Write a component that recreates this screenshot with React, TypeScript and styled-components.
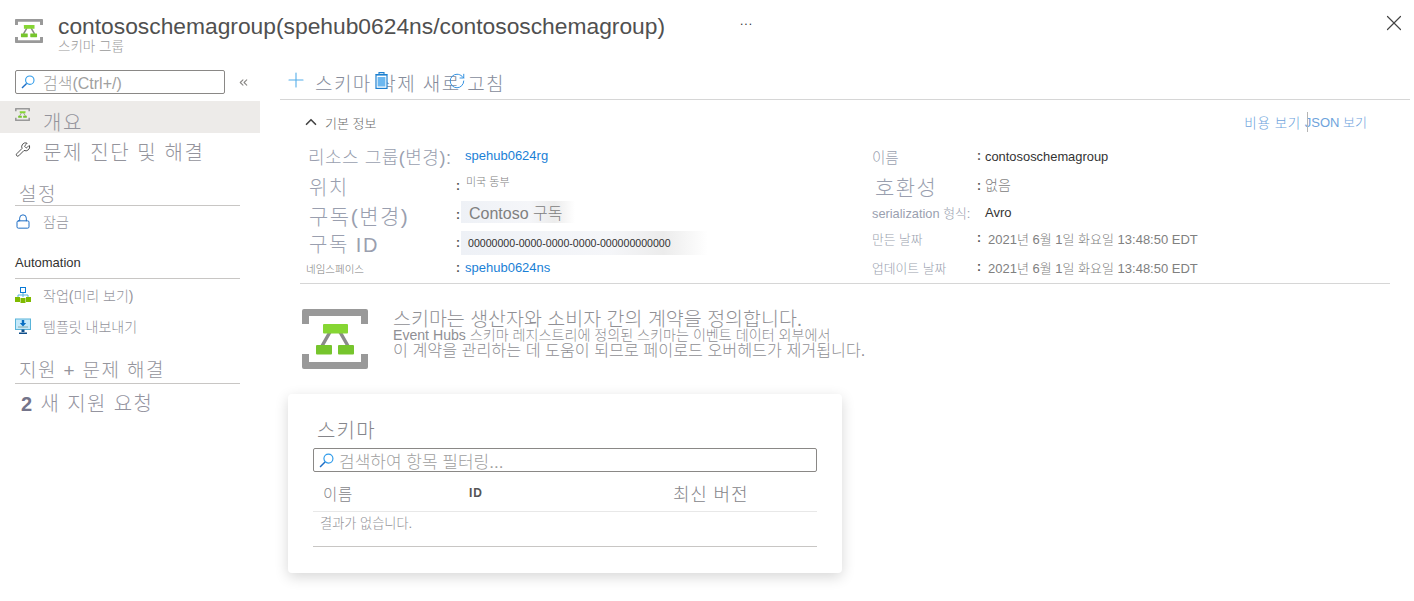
import styled, { createGlobalStyle } from "styled-components";
import { ChevronUp, ChevronsLeft, Lock, Plus, RotateCw, Wrench, X } from "lucide-react";

const GlobalStyle = createGlobalStyle`
  html, body {
    margin: 0;
    background: #fff;
  }
  body {
    font-family: "Liberation Sans", "Noto Sans CJK KR", sans-serif;
    font-weight: 300;
    color: #8a8886;
  }
`;

const Page = styled.div`
  width: 1414px;
  height: 601px;
  overflow: hidden;
`;

const TopBar = styled.header`
  display: flex;
  height: 70px;
  box-sizing: border-box;
  padding: 14px 7px 0 15px;
`;
const IconWrap = styled.span`
  margin-top: 5px;
  display: flex;
  align-self: flex-start;
`;
const TitleBlock = styled.div`
  margin-left: 15px;
  width: 682px;
  white-space: nowrap;
`;
const Title = styled.h1`
  margin: 0;
  font-size: 22.8px;
  line-height: 24px;
  font-weight: 400;
  color: #505050;
`;
const Subtitle = styled.div`
  font-size: 13.5px;
  line-height: 17px;
  color: #9a9a9a;
`;
const More = styled.div`
  font-size: 12px;
  line-height: 14px;
  letter-spacing: 1px;
  color: #333;
  flex: 1;
`;
const CloseIcon = styled(X)`
  margin-top: -4px;
  color: #444;
`;

const Body = styled.div`
  display: flex;
`;

const Sidebar = styled.nav`
  width: 260px;
  flex-shrink: 0;
`;
const SearchRow = styled.div`
  display: flex;
  align-items: center;
  padding-left: 15px;
  margin-bottom: 7px;
`;
const SearchBox = styled.div<{ $width: number; $size: number; $gap: number }>`
  width: ${p => p.$width}px;
  height: 24px;
  box-sizing: border-box;
  border: 1px solid #8a8886;
  border-radius: 2px;
  display: flex;
  align-items: center;
  gap: ${p => p.$gap}px;
  padding-left: 5px;
  font-size: ${p => p.$size}px;
  color: #a0a0a0;
  white-space: nowrap;
`;
const Collapse = styled.div`
  margin-left: 12px;
  display: flex;
  color: #8a8886;
`;
const NavRow = styled.div<{ $active?: boolean; $size?: number; $height: number }>`
  height: ${p => p.$height}px;
  box-sizing: border-box;
  display: flex;
  align-items: center;
  gap: 12px;
  padding-left: 15px;
  font-size: ${p => p.$size ?? 14}px;
  letter-spacing: ${p => ((p.$size ?? 14) > 16 ? "1.6px" : "0")};
  color: #94949c;
  background: ${p => (p.$active ? "#edebe9" : "transparent")};
`;
const NavLabel = styled.span<{ $drop?: number }>`
  padding-top: ${p => p.$drop ?? 0}px;
`;
const IconSlot = styled.span<{ $raise?: number }>`
  width: 16px;
  height: 16px;
  display: flex;
  align-items: center;
  margin-top: ${p => -(p.$raise ?? 0)}px;
`;
const SectionHead = styled.div<{ $size: number; $top: number; $bold?: boolean; $height: number; $lineHeight?: number }>`
  margin: ${p => p.$top}px 20px 0 15px;
  height: ${p => p.$height}px;
  line-height: ${p => p.$lineHeight ?? p.$height}px;
  padding-left: ${p => (p.$bold ? 0 : 4)}px;
  border-bottom: 1px solid #c8c6c4;
  font-size: ${p => p.$size}px;
  font-weight: ${p => (p.$bold ? 400 : 300)};
  letter-spacing: ${p => (p.$bold ? 0 : 1.4)}px;
  color: ${p => (p.$bold ? "#323130" : "#94949c")};
`;
const SupportRow = styled.div`
  padding: 7px 0 0 21px;
  font-size: 20px;
  line-height: 26px;
  letter-spacing: 1.4px;
  color: #94949f;
  b {
    font-weight: 700;
    color: #74748a;
  }
`;

const Main = styled.main`
  flex: 1;
  padding-left: 20px;
  min-width: 0;
`;
const Toolbar = styled.div`
  position: relative;
  height: 29px;
  margin-right: 4px;
  border-bottom: 1px solid #d6d6d6;
  display: flex;
  align-items: center;
  gap: 7px;
  padding-left: 4px;
  font-size: 19px;
  letter-spacing: 1.4px;
  color: #868c9b;
  svg {
    color: #55aeea;
  }
`;
const ToolbarText = styled.span`
  margin-top: -5px;
`;
const PlusIcon = styled(Plus)`
  margin-top: -10px;
`;
const ToolbarOverlay = styled.span<{ $left: number; $top: number }>`
  position: absolute;
  left: ${p => p.$left}px;
  top: ${p => p.$top}px;
  display: flex;
`;

const Essentials = styled.section`
  margin: 0 24px 0 20px;
  border-bottom: 1px solid #d6d6d6;
  height: 184px;
  box-sizing: border-box;
`;
const EssHead = styled.div`
  display: flex;
  align-items: center;
  height: 44px;
  justify-content: space-between;
  padding-right: 23px;
  padding-left: 2px;
`;
const EssToggle = styled.div`
  display: flex;
  align-items: center;
  gap: 5px;
  font-size: 13px;
  color: #6b6b6b;
  svg {
    color: #444;
  }
`;
const EssLinks = styled.div`
  display: flex;
  font-size: 13px;
  color: #6ea3dc;
`;
const CostLink = styled.span`
  font-size: 13.5px;
  letter-spacing: 0.6px;
`;
const JsonLink = styled.span`
  position: relative;
  margin-left: 4px;
  &::before {
    content: "";
    position: absolute;
    left: 2px;
    top: 0;
    bottom: 0;
    border-left: 1px solid #b5b5b5;
  }
`;
const EssColumns = styled.div`
  display: grid;
  grid-template-columns: 564px 1fr;
`;
const EssColumn = styled.div`
  display: flex;
  flex-direction: column;
  padding-left: 8px;
`;
const FieldRow = styled.div<{ $height: number; $labelWidth: number }>`
  display: grid;
  grid-template-columns: ${p => p.$labelWidth}px 8px 1fr;
  grid-template-rows: ${p => p.$height}px;
  align-items: center;
  height: ${p => p.$height}px;
`;
const FieldLabel = styled.div<{ $size: number; $spacing?: number; $indent?: number; $dim?: boolean }>`
  font-size: ${p => p.$size}px;
  letter-spacing: ${p => p.$spacing ?? 0}px;
  margin-left: ${p => p.$indent ?? 0}px;
  color: ${p => (p.$dim ? "#7c7c7c" : "#9a9faf")};
  white-space: nowrap;
`;
const Colon = styled.span`
  font-size: 12px;
  font-weight: 700;
  color: #555;
  margin-top: -1px;
`;
const LinkValue = styled.span`
  font-size: 13px;
  font-weight: 400;
  color: #1a7fd6;
  margin: -2px 0 0 1px;
`;
const PlainValue = styled.span<{ $dark?: boolean; $size?: number; $indent?: number; $raise?: number }>`
  font-size: ${p => p.$size ?? 13}px;
  font-weight: ${p => (p.$dark ? 400 : 300)};
  color: ${p => (p.$dark ? "#333" : "#808080")};
  white-space: nowrap;
  margin-left: ${p => p.$indent ?? 0}px;
  margin-top: ${p => -(p.$raise ?? 0)}px;
`;
const Redacted = styled.span<{ $width: number; $height: number; $raise?: number; $pad: number }>`
  display: inline-flex;
  align-items: center;
  width: ${p => p.$width}px;
  height: ${p => p.$height}px;
  padding-left: ${p => p.$pad}px;
  margin-left: -3px;
  margin-top: ${p => -(p.$raise ?? 0)}px;
  box-sizing: border-box;
  background: linear-gradient(90deg, #eef1f6 0%, #f5f6f9 60%, #ececec 82%, #fff 100%);
  white-space: nowrap;
`;

const Intro = styled.div`
  display: flex;
  gap: 25px;
  margin: 25px 0 0 22px;
`;
const IntroText = styled.div`
  padding-top: 3px;
  color: #8f8f94;
  white-space: nowrap;
`;
const IntroLine = styled.div<{ $size: number }>`
  font-size: ${p => p.$size}px;
  line-height: 15.5px;
`;

const Card = styled.section`
  width: 554px;
  height: 179px;
  box-sizing: border-box;
  margin: 25px 0 0 8px;
  padding: 25px 25px 0;
  border-radius: 4px;
  background: #fff;
  box-shadow: 0 4px 14px rgba(0, 0, 0, 0.16);
`;
const CardTitle = styled.h2`
  margin: 0;
  height: 29px;
  padding-left: 4px;
  font-size: 20px;
  line-height: 24px;
  letter-spacing: 1.2px;
  font-weight: 300;
  color: #85858a;
`;
const TableHead = styled.div`
  display: grid;
  grid-template-columns: 146px 204px 1fr;
  align-items: center;
  height: 40px;
  padding: 2px 0 0 10px;
  box-sizing: border-box;
  border-bottom: 1px solid #e8e8e8;
  font-size: 15.5px;
  letter-spacing: 0.8px;
  color: #85858a;
`;
const IdHead = styled.span`
  font-size: 12px;
  font-weight: 700;
  color: #555;
`;
const LatestHead = styled.span`
  font-size: 18px;
`;
const EmptyRow = styled.div`
  height: 35px;
  padding: 1px 0 0 7px;
  box-sizing: border-box;
  border-bottom: 1px solid #c8c6c4;
  font-size: 13.2px;
  color: #929297;
`;

function SchemaIcon({ width, height }: { width: number; height: number }) {
  return (
    <svg width={width} height={height} viewBox="0 0 66 60" preserveAspectRatio="none">
      <path d="M2 0h62a2 2 0 0 1 2 2v13h-7V7H7v8H0V2a2 2 0 0 1 2-2zM0 45h7v8h52v-8h7v13a2 2 0 0 1-2 2H2a2 2 0 0 1-2-2z" fill="#999" />
      <path d="M28 23 20 37M38 23l8 14" stroke="#8a8a8a" strokeWidth="3.5" fill="none" />
      <rect x="21" y="15" width="25" height="9.5" rx="1" fill="#86d633" />
      <rect x="14" y="36" width="16" height="9.5" rx="1" fill="#76c52d" />
      <rect x="36" y="36" width="16" height="9.5" rx="1" fill="#76c52d" />
    </svg>
  );
}

function LensIcon({ size }: { size: number }) {
  return (
    <svg width={size} height={size} viewBox="0 0 14 14">
      <circle cx="8.8" cy="5.2" r="4.2" fill="none" stroke="#2f9bea" strokeWidth="1.1" />
      <path d="M5.6 8.4 1 13" stroke="#1f6fc6" strokeWidth="1.4" />
    </svg>
  );
}

function TrashIcon() {
  return (
    <svg width="13" height="17" viewBox="0 0 13 17">
      <path d="M4 2V.6h5V2M.5 2.5h12" stroke="#1e80d0" strokeWidth="1.1" fill="none" />
      <rect x="1" y="3" width="11" height="13.4" fill="#fff" stroke="#1e80d0" strokeWidth="1.2" />
      <rect x="2.6" y="5" width="7.8" height="9.5" fill="#6db8f0" />
    </svg>
  );
}

function HierarchyIcon() {
  return (
    <svg width="16" height="16" viewBox="0 0 16 16">
      <rect x="5.5" y="0.5" width="5" height="5" fill="#fff" stroke="#0a7ad6" />
      <path d="M8 6v4M3 10V8h10v2" stroke="#59b4d9" fill="none" />
      <rect x="0" y="10" width="5" height="5" fill="#7fba00" />
      <rect x="5.5" y="11" width="5" height="5" fill="#7fba00" />
      <rect x="11" y="10" width="5" height="5" fill="#7fba00" />
    </svg>
  );
}

function ExportIcon() {
  return (
    <svg width="16" height="16" viewBox="0 0 16 16">
      <rect x="0.5" y="1" width="15" height="10.5" fill="#c5e9fa" stroke="#59b4d9" />
      <path d="M3 9h10" stroke="#8aa" />
      <path d="M6.8 2h2.4v3h2L8 8.4 4.8 5h2z" fill="#0a6fc2" />
      <path d="M6.5 11.5h3V14h-3zM4 14.5h8V16H4z" fill="#0f4e8a" />
    </svg>
  );
}

export default function App() {
  return (
    <Page>
      <GlobalStyle />
      <TopBar>
        <IconWrap>
          <SchemaIcon width={28} height={24} />
        </IconWrap>
        <TitleBlock>
          <Title>contososchemagroup(spehub0624ns/contososchemagroup)</Title>
          <Subtitle>스키마 그룹</Subtitle>
        </TitleBlock>
        <More>...</More>
        <CloseIcon size={26} strokeWidth={1.1} />
      </TopBar>
      <Body>
        <Sidebar>
          <SearchRow>
            <SearchBox $width={210} $size={16} $gap={8}>
              <LensIcon size={14} />
              검색(Ctrl+/)
            </SearchBox>
            <Collapse>
              <ChevronsLeft size={13} />
            </Collapse>
          </SearchRow>
          <NavRow $active $size={20} $height={32}>
            <IconSlot $raise={5}>
              <SchemaIcon width={15} height={13} />
            </IconSlot>
            <NavLabel $drop={9}>개요</NavLabel>
          </NavRow>
          <NavRow $size={20} $height={37}>
            <IconSlot $raise={5}>
              <Wrench size={17} color="#333" strokeWidth={1.3} />
            </IconSlot>
            문제 진단 및 해결
          </NavRow>
          <SectionHead $size={19} $top={10} $height={25} $lineHeight={29}>
            설정
          </SectionHead>
          <NavRow $height={30}>
            <IconSlot>
              <Lock size={17} color="#1f6fc6" strokeWidth={1.5} />
            </IconSlot>
            잠금
          </NavRow>
          <SectionHead $size={13} $top={12} $height={30} $bold>
            Automation
          </SectionHead>
          <NavRow $height={31}>
            <IconSlot>
              <HierarchyIcon />
            </IconSlot>
            작업(미리 보기)
          </NavRow>
          <NavRow $height={31}>
            <IconSlot>
              <ExportIcon />
            </IconSlot>
            템플릿 내보내기
          </NavRow>
          <SectionHead $size={19} $top={17} $height={25}>
            지원 + 문제 해결
          </SectionHead>
          <SupportRow>
            <b>2</b> 새 지원 요청
          </SupportRow>
        </Sidebar>
        <Main>
          <Toolbar>
            <PlusIcon size={24} strokeWidth={1.1} />
            <ToolbarText>스키마 삭제 새로 고침</ToolbarText>
            <ToolbarOverlay $left={95} $top={2}>
              <TrashIcon />
            </ToolbarOverlay>
            <ToolbarOverlay $left={168} $top={2}>
              <RotateCw size={18} style={{ color: "#2f8fe0" }} strokeWidth={1.3} />
            </ToolbarOverlay>
          </Toolbar>
          <Essentials>
            <EssHead>
              <EssToggle>
                <ChevronUp size={18} strokeWidth={2.2} />
                기본 정보
              </EssToggle>
              <EssLinks>
                <CostLink>비용 보기</CostLink>
                <JsonLink>JSON 보기</JsonLink>
              </EssLinks>
            </EssHead>
            <EssColumns>
              <EssColumn>
                <FieldRow $height={24} $labelWidth={148}>
                  <FieldLabel $size={18} $spacing={0.5}>리소스 그룹(변경):</FieldLabel>
                  <span />
                  <LinkValue>spehub0624rg</LinkValue>
                </FieldRow>
                <FieldRow $height={36} $labelWidth={148}>
                  <FieldLabel $size={20} $spacing={1.4} $indent={1}>위치</FieldLabel>
                  <Colon>:</Colon>
                  <PlainValue $size={11} $indent={2} $raise={10}>미국 동부</PlainValue>
                </FieldRow>
                <FieldRow $height={22} $labelWidth={148}>
                  <FieldLabel $size={21} $spacing={1.5} $indent={1}>구독(변경)</FieldLabel>
                  <Colon>:</Colon>
                  <Redacted $width={114} $height={22} $raise={6} $pad={8}>
                    <PlainValue $size={16}>Contoso 구독</PlainValue>
                  </Redacted>
                </FieldRow>
                <FieldRow $height={34} $labelWidth={148}>
                  <FieldLabel $size={20} $spacing={1.5} $indent={1}>구독 ID</FieldLabel>
                  <Colon>:</Colon>
                  <Redacted $width={247} $height={24} $pad={7}>
                    <PlainValue $dark $size={10.6}>00000000-0000-0000-0000-000000000000</PlainValue>
                  </Redacted>
                </FieldRow>
                <FieldRow $height={16} $labelWidth={148}>
                  <FieldLabel $size={10.5} $indent={-2} $dim>네임스페이스</FieldLabel>
                  <Colon>:</Colon>
                  <LinkValue>spehub0624ns</LinkValue>
                </FieldRow>
              </EssColumn>
              <EssColumn>
                <FieldRow $height={24} $labelWidth={105}>
                  <FieldLabel $size={14.5}>이름</FieldLabel>
                  <Colon>:</Colon>
                  <PlainValue $dark $size={12.9}>contososchemagroup</PlainValue>
                </FieldRow>
                <FieldRow $height={36} $labelWidth={105}>
                  <FieldLabel $size={21} $spacing={1.4} $indent={3}>호환성</FieldLabel>
                  <Colon>:</Colon>
                  <PlainValue $size={14} $raise={4}>없음</PlainValue>
                </FieldRow>
                <FieldRow $height={16} $labelWidth={105}>
                  <FieldLabel $size={12.8}>serialization 형식:</FieldLabel>
                  <span />
                  <PlainValue $dark>Avro</PlainValue>
                </FieldRow>
                <FieldRow $height={36} $labelWidth={105}>
                  <FieldLabel $size={12.8}>만든 날짜</FieldLabel>
                  <Colon>:</Colon>
                  <PlainValue $indent={3}>2021년 6월 1일 화요일 13:48:50 EDT</PlainValue>
                </FieldRow>
                <FieldRow $height={22} $labelWidth={105}>
                  <FieldLabel $size={12.8}>업데이트 날짜</FieldLabel>
                  <Colon>:</Colon>
                  <PlainValue $indent={3}>2021년 6월 1일 화요일 13:48:50 EDT</PlainValue>
                </FieldRow>
              </EssColumn>
            </EssColumns>
          </Essentials>
          <Intro>
            <SchemaIcon width={66} height={60} />
            <IntroText>
              <IntroLine $size={19.5}>스키마는 생산자와 소비자 간의 계약을 정의합니다.</IntroLine>
              <IntroLine $size={14.1}>Event Hubs 스키마 레지스트리에 정의된 스키마는 이벤트 데이터 외부에서</IntroLine>
              <IntroLine $size={16.2}>이 계약을 관리하는 데 도움이 되므로 페이로드 오버헤드가 제거됩니다.</IntroLine>
            </IntroText>
          </Intro>
          <Card>
            <CardTitle>스키마</CardTitle>
            <SearchBox $width={504} $size={17} $gap={5}>
              <LensIcon size={15} />
              검색하여 항목 필터링...
            </SearchBox>
            <TableHead>
              <span>이름</span>
              <IdHead>ID</IdHead>
              <LatestHead>최신 버전</LatestHead>
            </TableHead>
            <EmptyRow>결과가 없습니다.</EmptyRow>
          </Card>
        </Main>
      </Body>
    </Page>
  );
}
